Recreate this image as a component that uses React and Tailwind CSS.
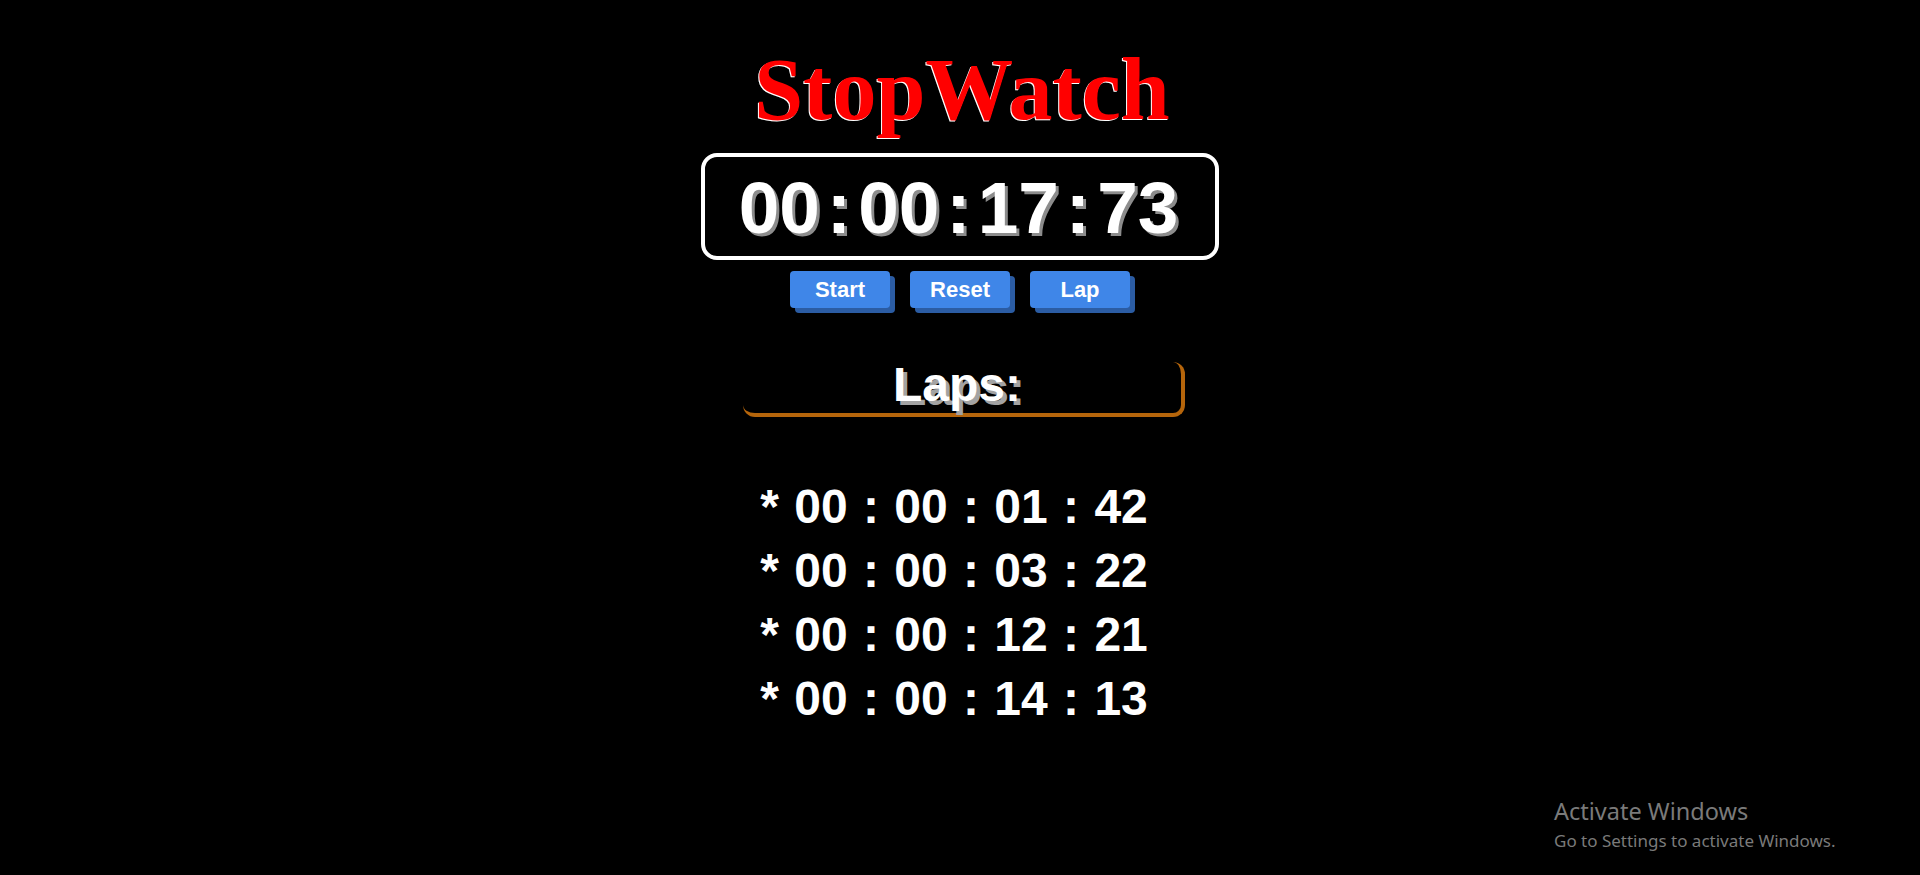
import React from "react";

const laps = ["00 : 00 : 01 : 42", "00 : 00 : 03 : 22", "00 : 00 : 12 : 21", "00 : 00 : 14 : 13"];

function TimePart({ value }) {
  return <span>{value}</span>;
}

export default function App() {
  const parts = ["00", "00", "17", "73"];

  return (
    <div className="min-h-[875px] w-full bg-black text-white font-['Liberation_Sans',Arial,sans-serif] relative overflow-hidden">
      <div className="flex flex-col items-center pt-[46px]">
        {/* Title */}
        <h1 className="font-['Liberation_Serif','Times_New_Roman',serif] font-bold text-[88px] leading-[88px] text-[#f00] [text-shadow:-1px_1px_0_#fff] pl-[4px]">
          StopWatch
        </h1>

        {/* Timer display */}
        <div className="mt-[19px] w-[518px] border-4 border-white rounded-[16px] flex justify-center pt-[10px] pb-[8px] pr-[3px]">
          <div className="font-bold text-[73px] leading-[81px] [text-shadow:3px_3px_0_#8c8c8c] flex">
            {parts.map((p, i) => (
              <React.Fragment key={i}>
                {i > 0 && <span className="px-[7px]">:</span>}
                <TimePart value={p} />
              </React.Fragment>
            ))}
          </div>
        </div>

        {/* Buttons */}
        <div className="mt-[11px] flex gap-[20px]">
          {["Start", "Reset", "Lap"].map((label) => (
            <button
              key={label}
              className="w-[100px] h-[37px] rounded-[4px] bg-[#3f86e8] shadow-[5px_5px_0_#2b5ca3] text-white font-bold text-[22px] leading-[37px]"
            >
              {label}
            </button>
          ))}
        </div>

        {/* Laps header */}
        <div className="mt-[54px] pl-[8px]">
          <div className="w-[442px] border-r-4 border-b-4 border-[#b5650b] rounded-[12px] pb-[5px] pr-[10px] text-center">
            <span className="font-bold text-[48px] leading-[46px] [text-shadow:4px_4px_0_#a3a3a3]">Laps:</span>
          </div>
        </div>

        {/* Laps list */}
        <ul className="mt-[58px] pr-[12px]">
          {laps.map((lap, i) => (
            <li key={i} className="font-bold text-[48px] leading-[64px] [word-spacing:2px]">
              * {lap}
            </li>
          ))}
        </ul>
      </div>

      {/* Windows watermark */}
      <div className="absolute left-[1554px] top-[796px] text-[#7a7a7a] font-['Noto_Sans','Open_Sans',sans-serif]">
        <div className="text-[23.5px] leading-[30px]">Activate Windows</div>
        <div className="text-[17px] leading-[30px]">Go to Settings to activate Windows.</div>
      </div>
    </div>
  );
}
